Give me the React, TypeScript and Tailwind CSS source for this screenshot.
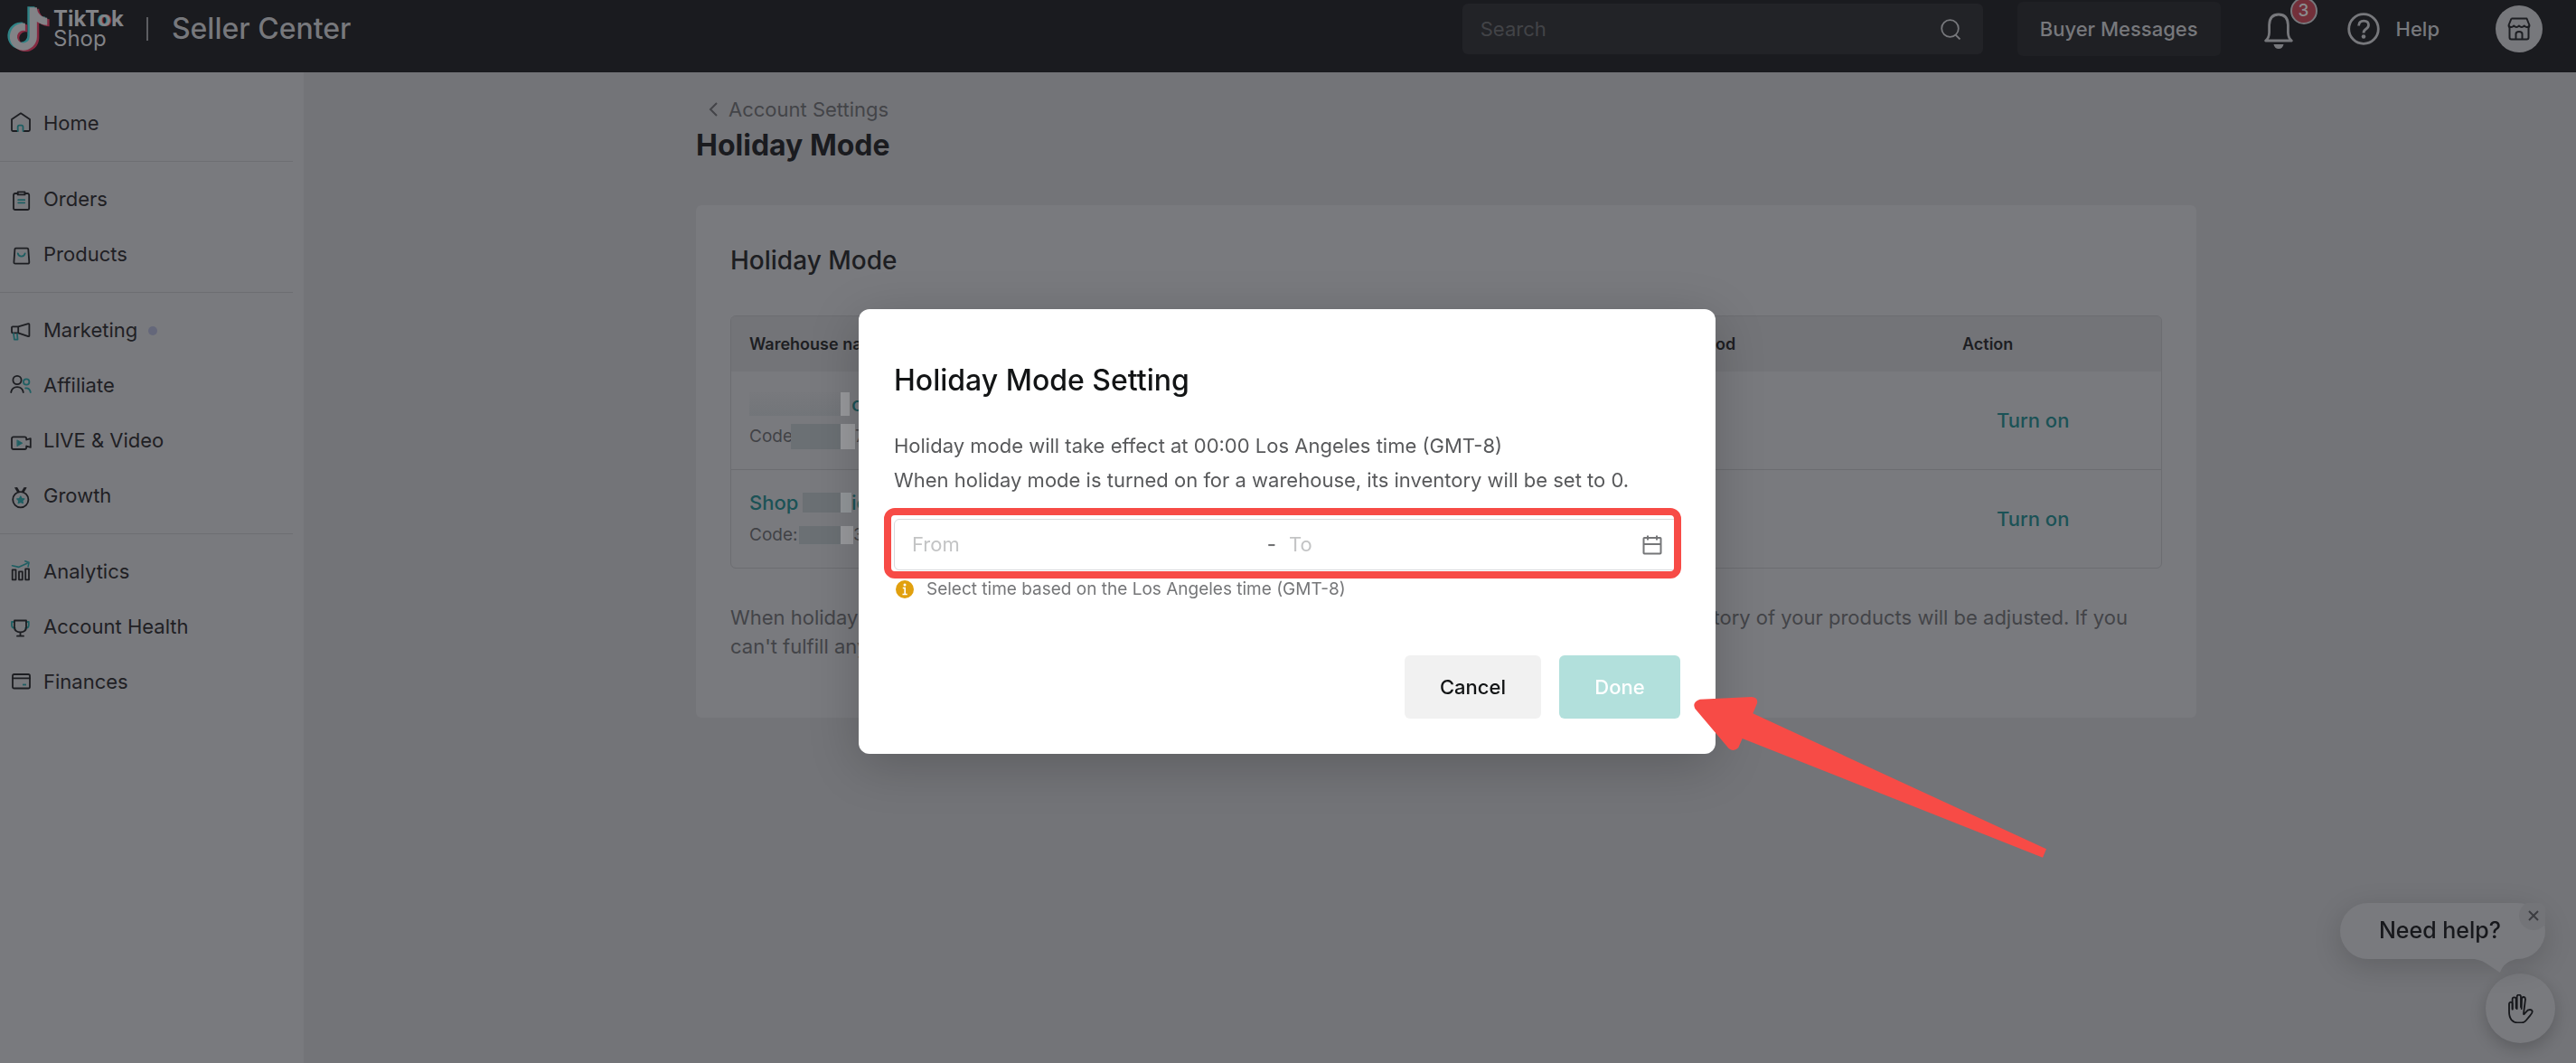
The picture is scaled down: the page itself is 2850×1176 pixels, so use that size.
import type { ReactNode } from 'react';

const NOTE =
  'M448,209.91a210.06,210.06,0,0,1-122.77-39.25V349.38A162.55,162.55,0,1,1,185,188.31V278.2a74.62,74.62,0,1,0,52.23,71.18V0l88,0a121.18,121.18,0,0,0,1.86,22.17h0A122.18,122.18,0,0,0,381,102.39a121.43,121.43,0,0,0,67,20.14Z';

const T = '#1f5f63';

function Glyph({ children }: { children: ReactNode }) {
  return (
    <svg
      viewBox="0 0 24 24"
      className="size-6 shrink-0 overflow-visible"
      fill="none"
      stroke="#1d1e22"
      strokeWidth="1.8"
      strokeLinecap="round"
      strokeLinejoin="round"
      aria-hidden="true"
    >
      {children}
    </svg>
  );
}

type Item = { label: string; icon: ReactNode; dot?: boolean };

const NAV: Item[][] = [
  [
    {
      label: 'Home',
      icon: (
        <Glyph>
          <path d="M8.5 20H3.5Q2 20 2 18.500V7L12 0.300L22 7v11.500q0 1.500-1.500 1.500h-5" />
          <path d="M8.700 20v-4.500a1.800 1.800 0 0 1 1.800-1.800h2.200a1.800 1.800 0 0 1 1.800 1.800V20" stroke={T} />
        </Glyph>
      ),
    },
  ],
  [
    {
      label: 'Orders',
      icon: (
        <Glyph>
          <path d="M8.500 5H6Q4 5 4 7v14.200q0 1.800 2 1.800h13.400q1.800 0 1.800-1.800V7q0-2-1.800-2h-2.900" />
          <rect x="8.700" y="3.400" width="7.800" height="3" />
          <path d="M9.200 12.200h7M9.200 15.300h7" stroke={T} />
        </Glyph>
      ),
    },
    {
      label: 'Products',
      icon: (
        <Glyph>
          <path d="M6.500 4.700h12.600q1 0 1.200 1l1 14.200q0 1.800-1.800 1.800H6q-1.700 0-1.600-1.800l1-14.200q.1-1 1.100-1z" />
          <path d="M8.700 10.300q.8 3.400 4 3.400t4-3.400" stroke={T} />
        </Glyph>
      ),
    },
  ],
  [
    {
      label: 'Marketing',
      dot: true,
      icon: (
        <Glyph>
          <path d="M2 8.300q0-1 1-1h6.200v7H3q-1 0-1-1zM9.200 7.300l11-3.200q1.200-.3 1.200.9v12.300q0 1.200-1.200.8l-11-3.800" />
          <path d="M4 15l.9 6.600h3.600L8 15.300" stroke={T} />
        </Glyph>
      ),
    },
    {
      label: 'Affiliate',
      icon: (
        <Glyph>
          <circle cx="8" cy="5.500" r="4.600" />
          <path d="M1.200 19q1.200-5.800 6.800-5.800T14.800 19" />
          <circle cx="18.200" cy="7.500" r="3.200" stroke={T} />
          <path d="M17.200 14.500q4.600-.4 5.600 4.500" stroke={T} />
        </Glyph>
      ),
    },
    {
      label: 'LIVE & Video',
      icon: (
        <Glyph>
          <path d="M4 7.300h12.200q2 0 2 2v1.200l4.600-1.400v9.800l-4.600-1.400v1.500q0 2-2 2H4q-2 0-2-2V9.300q0-2 2-2z" />
          <path d="M8.200 11l5.600 3.200-5.600 3.300z" fill={T} stroke={T} strokeWidth="0.8" />
        </Glyph>
      ),
    },
    {
      label: 'Growth',
      icon: (
        <Glyph>
          <circle cx="11.800" cy="15.800" r="8.600" />
          <path d="M6 2.700l3 5M17.700 2.700l-3 5M7.600 2.700l2.400 4M16.100 2.700l-2.400 4" strokeWidth="1.500" />
          <path
            d="M11.800 12l1.300 2.500 2.800.4-2 2 .5 2.800-2.600-1.300-2.600 1.300.5-2.800-2-2 2.800-.4z"
            fill={T}
            stroke={T}
            strokeWidth="1.200"
          />
        </Glyph>
      ),
    },
  ],
  [
    {
      label: 'Analytics',
      icon: (
        <Glyph>
          <rect x="2.700" y="9.300" width="3.800" height="11" />
          <rect x="10" y="11.300" width="3.800" height="9" />
          <rect x="17.200" y="8.300" width="3.800" height="12" />
          <path d="M2.500 4.700l7 1.700 9.500-4.200M16.800-.2l4.200 1.500-.9 4.500" stroke={T} strokeWidth="1.600" />
        </Glyph>
      ),
    },
    {
      label: 'Account Health',
      icon: (
        <Glyph>
          <path d="M5 6H2v3.500q0 3.300 3.600 3.500M17.800 6h3v3.500q0 3.300-3.600 3.500" stroke={T} />
          <path d="M5 4.500h13V12q0 5-6.500 5.500Q5 17 5 12zM11.500 17.500v4M8 21.700h7" />
        </Glyph>
      ),
    },
    {
      label: 'Finances',
      icon: (
        <Glyph>
          <rect x="3" y="3" width="19" height="15.500" rx="1.800" />
          <path d="M3 7.400h19" />
          <path d="M14 14.500h4" stroke={T} strokeLinecap="butt" />
        </Glyph>
      ),
    },
  ],
];

function Header() {
  return (
    <header className="flex items-center bg-[#1a1b1f] pr-[37px] pb-4 pl-2 text-[22px] font-medium text-[#77787c]">
      <div className="flex h-16 items-center">
        <svg viewBox="-28 -6 508 540" className="h-[50px] w-[47px]" aria-hidden="true">
          <path d={NOTE} fill="#2f8285" transform="translate(-24 -4)" />
          <path d={NOTE} fill="#852b42" transform="translate(28 24)" />
          <path d={NOTE} fill="#828387" transform="translate(2 8)" />
        </svg>
        <div className="ml-1 text-2xl leading-[22px] text-[#828387]">
          <div className="font-bold">
            TikT<span className="[text-shadow:-1px_0_0_#2f8285,1px_0_0_#852b42]">o</span>k
          </div>
          <div className="font-normal">Shop</div>
        </div>
        <div className="ml-[25px] h-[26px] w-0.5 bg-[#5d5e62]" />
        <div className="ml-[26px] text-[32px]">Seller Center</div>
      </div>
      <div className="ml-auto flex h-14 w-[576px] items-center rounded-md bg-[#222327] pr-6 pl-5">
        <input
          type="search"
          aria-label="Search"
          placeholder="Search"
          className="min-w-0 flex-1 bg-transparent font-normal outline-none placeholder:text-[#424347]"
        />
        <button type="button" aria-label="Submit search">
          <svg viewBox="0 0 24 24" className="size-6" fill="none" stroke="#77787c" strokeWidth="1.800">
            <circle cx="11.500" cy="11.500" r="9.300" />
            <path d="M17.500 18.500l5 5" />
          </svg>
        </button>
      </div>
      <button type="button" className="ml-[38px] h-[60px] rounded-md bg-[#1f2024] px-[25px]">
        Buyer Messages
      </button>
      <button type="button" aria-label="Notifications" className="relative ml-12">
        <svg viewBox="0 0 32 38" className="h-[38px] w-8 overflow-visible" fill="none" stroke="#77787c" strokeWidth="2.800" strokeLinejoin="round">
          <path d="M1.600 32Q5.400 29 5.600 23V14.500Q6 3 16 3t10.400 11.500V23q.2 6 4 9z" />
          <path d="M10.500 36h11q-1 5-5.500 5t-5.500-5z" fill="#77787c" stroke="none" />
        </svg>
        <span className="absolute -top-4 left-[29px] flex size-[30px] items-center justify-center rounded-full border-2 border-[#77787c] bg-[#73303a] text-[19px] text-[#8b8c8e]">
          3
        </span>
      </button>
      <a href="#help" className="ml-[60px] flex items-center gap-[18px]">
        <svg viewBox="0 0 36 36" className="size-9" fill="none" stroke="#77787c" strokeWidth="2.800">
          <circle cx="18" cy="18" r="16.300" />
          <path d="M12.600 14.500q.2-5.300 5.600-5.300 5.300 0 5.300 4.600 0 2.500-2.700 4.200Q18 19.700 18 22.500" />
          <circle cx="18" cy="26.500" r="2.300" fill="#77787c" stroke="none" />
        </svg>
        Help
      </a>
      <button
        type="button"
        aria-label="Shop profile"
        className="ml-[62px] flex size-[52px] items-center justify-center rounded-full bg-[#77787c]"
      >
        <svg viewBox="0 0 26 26" className="size-[26px]" fill="none" stroke="#1d1e22" strokeWidth="2" strokeLinejoin="round">
          <path d="M4.500 1.500h17L24.500 9q0 1.500-1.200 2.500M4.500 1.500L1.500 9q0 1.500 1.200 2.500" />
          <path d="M1.500 9.500q2.900 3 5.750 0 2.900 3 5.750 0 2.900 3 5.750 0 2.900 3 5.750 0M2.500 11v11.500q0 2 2 2h17q2 0 2-2V11" />
          <path d="M9.500 24.500v-6q0-2.500 3.500-2.500t3.500 2.500v6" />
        </svg>
      </button>
    </header>
  );
}

function Sidebar() {
  return (
    <nav className="w-[336px] shrink-0 bg-[#797a7e] pt-[26px]">
      {NAV.map((group, i) => (
        <div key={group[0].label}>
          {i > 0 && <hr className="my-[11px] mr-3 border-t border-[#6d6e72]" />}
          <ul>
            {group.map((item) => (
              <li key={item.label}>
                <a href="#nav" className="flex h-[61px] items-center pl-[11px] text-[22px] text-[#1f2024]">
                  {item.icon}
                  <span className="ml-[13px]">{item.label}</span>
                  {item.dot && <span className="ml-3 size-2.5 rounded-full bg-[#64677a]" />}
                </a>
              </li>
            ))}
          </ul>
        </div>
      ))}
    </nav>
  );
}

function Row({ name, code }: { name: ReactNode; code: ReactNode }) {
  return (
    <tr className="border-t border-[#6c6d71] first:border-t-0">
      <td className="py-[18px] pl-5">
        <div className="flex h-9 items-center text-[22px] font-medium whitespace-nowrap text-[#1b5256]">{name}</div>
        <div className="flex h-9 items-center text-[19px] whitespace-nowrap text-[#414246]">{code}</div>
      </td>
      <td />
      <td className="pl-[38px]">
        <button type="button" className="text-[22px] font-medium text-[#1b5256]">
          Turn on
        </button>
      </td>
    </tr>
  );
}

function Main() {
  return (
    <main className="flex-1 bg-[#737478] pl-3.5">
      <div className="mx-auto max-w-[1660px] pt-[25px]">
        <a href="#account" className="flex items-center pl-3.5 text-[22px] leading-8 text-[#434448]">
          <svg viewBox="0 0 10 16" className="h-4 w-2.5" fill="none" stroke="#434448" strokeWidth="2">
            <path d="M9 1L2 8l7 7" />
          </svg>
          <span className="ml-3">Account Settings</span>
        </a>
        <h1 className="mt-1 text-[32px] leading-10 font-bold text-[#1a1b1f]">Holiday Mode</h1>
        <section className="mt-[46px] rounded-md bg-[#797a7e] px-[38px] pt-[41px] pb-[63px]">
          <h2 className="text-[28px] leading-10 font-medium text-[#1d1e22]">Holiday Mode</h2>
          <div className="mt-[41px] overflow-hidden rounded-md border border-[#6c6d71]">
            <table className="w-full table-fixed border-collapse text-left">
              <thead className="bg-[#737478] text-[18px] font-semibold text-[#1d1e22]">
                <tr className="h-[61px]">
                  <th className="w-[985px] pl-5 font-semibold">Warehouse name</th>
                  <th className="font-semibold">Holiday period</th>
                  <th className="w-[220px] font-semibold">Action</th>
                </tr>
              </thead>
              <tbody>
                <Row
                  name={
                    <>
                      <span className="h-[26px] w-[101px] bg-linear-to-b from-[#78797d] to-[#727579]" />
                      <span className="h-[26px] w-2.5 bg-[#999a9d]" />
                      <span className="ml-0.5">on</span>
                    </>
                  }
                  code={
                    <>
                      <span className="w-[46px]">Code</span>
                      <span className="h-7 w-[55px] bg-[#6b7074]" />
                      <span className="h-7 w-4 bg-[#999a9d]" />
                      <span>7</span>
                    </>
                  }
                />
                <Row
                  name={
                    <>
                      <span className="w-[59px]">Shop</span>
                      <span className="h-[22px] w-[42px] bg-[#6b7074]" />
                      <span className="h-[22px] w-3 bg-[#93979a]" />
                      <span>ion</span>
                    </>
                  }
                  code={
                    <>
                      <span className="w-[55px]">Code:</span>
                      <span className="h-5 w-[46px] bg-[#6b7074]" />
                      <span className="h-5 w-3.5 bg-[#999a9d]" />
                      <span>3</span>
                    </>
                  }
                />
              </tbody>
            </table>
          </div>
          <p className="mt-[38px] text-[22px] leading-8 text-[#434448]">
            <span className="flex justify-between pr-[38px]">
              <span>When holiday mode is turned on for a warehouse, orders</span>
              <span>and the inventory of your products will be adjusted. If you</span>
            </span>
            <span>can't fulfill any orders in time, turn on holiday mode.</span>
          </p>
        </section>
      </div>
    </main>
  );
}

function HelpBubble() {
  return (
    <aside className="fixed right-[23px] bottom-[22px] flex flex-col items-end">
      <div className="relative mr-[11px] flex h-[62px] items-center rounded-full bg-[#797a7e] pr-[49px] pl-[43px] text-[25px] font-medium text-[#17181c] shadow-[0_8px_32px_rgba(0,0,0,0.16)]">
        Need help?
        <svg viewBox="0 0 60 16" className="absolute top-[61px] right-[25px] h-4 w-[60px]" fill="#797a7e" aria-hidden="true">
          <path d="M0 0.500q12 0 20 5.500l15 10q4-13 21-15.500z" />
        </svg>
        <span className="absolute inset-0 overflow-hidden">
          <button
            type="button"
            aria-label="Close help"
            className="absolute -top-0.5 -right-[3px] flex size-8 items-center justify-center rounded-full bg-[#737478]"
          >
            <svg viewBox="0 0 12 12" className="size-3" stroke="#3c3d41" strokeWidth="2">
              <path d="M1 1l10 10M11 1L1 11" />
            </svg>
          </button>
        </span>
      </div>
      <button
        type="button"
        aria-label="Open help chat"
        className="mt-4 flex size-[77px] items-center justify-center rounded-full bg-[#797a7e] shadow-[0_6px_18px_rgba(0,0,0,0.2)]"
      >
        <svg viewBox="0 0 84 96" className="h-8 w-7" fill="none" stroke="#17181c" strokeWidth="5.500" strokeLinecap="round" strokeLinejoin="round">
          <path d="M14 50V31q0-5-5-5t-6 6v25q0 18 8 28 8 9 19 9h15q8 0 14-7l14-17q8-8 7-14-2-5-8-5-8 0-13 8l-6 7q-2 1-2-2l6-48q0-6-5-7t-7 5L44 48" />
          <path d="M14 48V16q0-6 6-6t6 6v30M29 48V8q0-6 6.500-6T42 8v34" />
        </svg>
      </button>
    </aside>
  );
}

function HolidayDialog() {
  return (
    <div className="fixed inset-0 flex items-center justify-center pr-0.5">
      <div
        role="dialog"
        aria-modal="true"
        aria-labelledby="dialog-title"
        className="relative w-[948px] rounded-xl bg-white px-[39px] pt-[59px] pb-[39px] shadow-[0_12px_56px_rgba(0,0,0,0.2)]"
      >
        <h2 id="dialog-title" className="text-[32px] leading-10 font-medium text-[#121415]">
          Holiday Mode Setting
        </h2>
        <p className="mt-[33px] text-[22px] leading-[38px] text-[#58595b]">
          Holiday mode will take effect at 00:00 Los Angeles time (GMT-8)
          <br />
          When holiday mode is turned on for a warehouse, its inventory will be set to 0.
        </p>
        <div className="relative mt-6">
          <div className="flex h-[57px] items-center rounded-md border border-[#d8dadc] px-[19px] text-[22px] text-[#707173]">
            <input
              aria-label="From"
              placeholder="From"
              className="min-w-0 flex-1 outline-none placeholder:text-[#c3c4c5]"
            />
            <span className="mr-3.5 font-medium">-</span>
            <input
              aria-label="To"
              placeholder="To"
              className="w-[391px] outline-none placeholder:text-[#c3c4c5]"
            />
            <button type="button" aria-label="Open calendar">
              <svg viewBox="0 0 22 22" className="size-[22px]" fill="none" stroke="#757678" strokeWidth="2">
                <rect x="1.500" y="3" width="19" height="17.500" rx="0.800" />
                <path d="M1.500 10h19M6 0.500v5M16 0.500v5" />
              </svg>
            </button>
          </div>
          <div className="pointer-events-none absolute -top-3 -right-px -bottom-[9px] -left-[11px] rounded-xl border-8 border-[#f74b46]" />
        </div>
        <p className="mt-[9px] flex items-center text-[19px] leading-6 text-[#757678]">
          <svg viewBox="0 0 20 20" className="ml-0.5 size-5" aria-hidden="true">
            <circle cx="10" cy="10" r="10" fill="#e1a00e" />
            <circle cx="10" cy="5" r="1.500" fill="#fff" />
            <path d="M7.800 8.500h2.400v7M7.500 15.500h5.200" stroke="#fff" strokeWidth="1.600" fill="none" />
          </svg>
          <span className="ml-3.5">Select time based on the Los Angeles time (GMT-8)</span>
        </p>
        <div className="mt-[61px] flex justify-end gap-5 text-[22px] font-medium">
          <button type="button" className="h-[70px] w-[151px] rounded-md bg-[#f1f1f1] text-[#121415]">
            Cancel
          </button>
          <button type="button" disabled className="h-[70px] w-[134px] rounded-md bg-[#b2e0dc] text-white">
            Done
          </button>
        </div>
        <svg
          viewBox="0 0 1320 690"
          className="pointer-events-none absolute top-[398px] left-[900px] h-[230px] w-[440px]"
          fill="#f74b46"
          aria-hidden="true"
        >
          <path d="M92 101L263 93Q286 94 282 114L268 148L1242 598L1230 626L233 231L220 261Q205 278 188 264L76 132Q65 110 92 101Z" />
        </svg>
      </div>
    </div>
  );
}

export default function App() {
  return (
    <div className="flex min-h-screen flex-col bg-[#737478] font-['Inter','Liberation_Sans',sans-serif]">
      <Header />
      <div className="flex flex-1">
        <Sidebar />
        <Main />
      </div>
      <HelpBubble />
      <HolidayDialog />
    </div>
  );
}
